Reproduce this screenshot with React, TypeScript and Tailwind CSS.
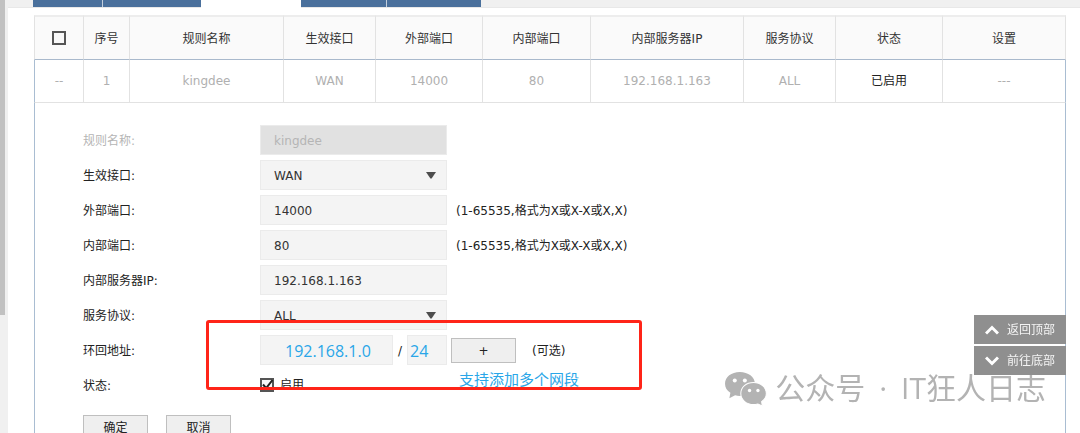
import { useState } from 'react';
import type { ReactNode } from 'react';

const columns = [
  { title: '序号', width: 'w-[46px]', value: '1' },
  { title: '规则名称', width: 'w-[154px]', value: 'kingdee' },
  { title: '生效接口', width: 'w-[92px]', value: 'WAN' },
  { title: '外部端口', width: 'w-[107px]', value: '14000' },
  { title: '内部端口', width: 'w-[108px]', value: '80' },
  { title: '内部服务器IP', width: 'w-[153px]', value: '192.168.1.163' },
  { title: '服务协议', width: 'w-[92px]', value: 'ALL' },
  { title: '状态', width: 'w-[107px]', value: '已启用', active: true },
  { title: '设置', width: 'w-[123px]', value: '---' },
];

const portHint = '(1-65535,格式为X或X-X或X,X)';

const box = 'h-[30px] border border-[#ebebeb] pt-[2px] outline-none';
const field = `${box} w-[187px] bg-[#f4f4f4] px-[13px] text-[#333]`;
const addressField = `${box} bg-[#f4f4f4] font-['Open_Sans',sans-serif] text-[16px] text-[#2aa6e8]`;
const button = 'h-[25px] w-[65px] border border-[#bfbfbf] bg-[#efefef] pt-[2px] text-center leading-[21px]';

interface RowProps {
  id: string;
  label: string;
  muted?: boolean;
  children: ReactNode;
}

function Row({ id, label, muted, children }: RowProps) {
  return (
    <div className="relative flex h-[30px] items-center">
      <label htmlFor={id} className={muted ? 'w-[177px] shrink-0 pt-[2px] text-[#b5b5b5]' : 'w-[177px] shrink-0 pt-[2px]'}>
        {label}
      </label>
      {children}
    </div>
  );
}

function SelectField({ id, options }: { id: string; options: string[] }) {
  return (
    <div className="relative">
      <select id={id} className={`${field} appearance-none`}>
        {options.map((option) => (
          <option key={option}>{option}</option>
        ))}
      </select>
      <svg viewBox="0 0 10 7" className="pointer-events-none absolute top-3 right-[11px] h-[7px] w-[10px]">
        <path d="M0 0h10L5.6 6.6h-1.2z" fill="#4d4d4d" />
      </svg>
    </div>
  );
}

function TopTabs() {
  return (
    <nav className="flex h-[8px] border-b border-[#e8e8e8] bg-[#f0f0f0] pl-[25px]">
      <a href="#tab1" aria-label="Tab 1" className="w-[70px] border-r border-[#c3cfdd] bg-[#4a709c]" />
      <a href="#tab2" aria-label="Tab 2" className="w-[98px] bg-[#4a709c]" />
      <a href="#tab3" aria-label="Tab 3" className="h-[8px] w-[100px] bg-white" />
      <a href="#tab4" aria-label="Tab 4" className="w-[86px] border-r border-[#c3cfdd] bg-[#4a709c]" />
      <a href="#tab5" aria-label="Tab 5" className="w-[94px] bg-[#4a709c]" />
    </nav>
  );
}

function RuleTable() {
  return (
    <table className="w-full table-fixed border-separate border-spacing-0 text-center">
      <thead>
        <tr className="h-[45px] bg-[#fafafa] [&>th]:border-t-2 [&>th]:border-r [&>th]:border-b [&>th]:border-t-[#ededed] [&>th]:border-r-[#e2e2e2] [&>th]:border-b-[#a9b9cc]">
          <th className="w-[50px] border-l border-l-[#e2e2e2] p-0">
            <input
              type="checkbox"
              aria-label="全选"
              className="mx-auto block size-[14px] appearance-none border-2 border-[#555] bg-[#f8f8f8]"
            />
          </th>
          {columns.map((column) => (
            <th key={column.title} className={`${column.width} p-0 pt-[2px] font-normal text-[#333]`}>
              {column.title}
            </th>
          ))}
        </tr>
      </thead>
      <tbody>
        <tr className="h-[43px] text-[#b0b0b0] [&>td]:border-r [&>td]:border-b [&>td]:border-[#e2e2e2] [&>td:last-child]:border-r-[#a9bdd2]">
          <td className="border-l border-l-[#a9bdd2]! p-0">--</td>
          {columns.map((column) => (
            <td key={column.title} className={column.active ? 'p-0 text-[#222]' : 'p-0'}>
              {column.value}
            </td>
          ))}
        </tr>
      </tbody>
    </table>
  );
}

function RuleForm() {
  const [enabled, setEnabled] = useState(true);

  return (
    <form className="flex flex-1 flex-col gap-[5px] border-x border-[#a9bdd2] pt-[22px] pl-12 text-[#222]">
      <Row id="name" label="规则名称:" muted>
        <input
          id="name"
          disabled
          defaultValue="kingdee"
          className={`${box} w-[187px] bg-[#e1e1e1] px-[13px] text-[#b5b5b5]`}
        />
      </Row>
      <Row id="iface" label="生效接口:">
        <SelectField id="iface" options={['WAN']} />
      </Row>
      <Row id="outer" label="外部端口:">
        <input id="outer" defaultValue="14000" className={field} />
        <span className="ml-[9px] pt-[2px]">{portHint}</span>
      </Row>
      <Row id="inner" label="内部端口:">
        <input id="inner" defaultValue="80" className={field} />
        <span className="ml-[9px] pt-[2px]">{portHint}</span>
      </Row>
      <Row id="server" label="内部服务器IP:">
        <input id="server" defaultValue="192.168.1.163" className={field} />
      </Row>
      <Row id="protocol" label="服务协议:">
        <SelectField id="protocol" options={['ALL', 'TCP', 'UDP']} />
      </Row>
      <Row id="loopback" label="环回地址:">
        <input id="loopback" defaultValue="192.168.1.0" className={`${addressField} w-[133px] pl-6`} />
        <span className="w-[14px] pt-[2px] text-center">/</span>
        <input aria-label="掩码" defaultValue="24" className={`${addressField} w-10 pl-[2px]`} />
        <button type="button" className={`${button} ml-1`}>
          +
        </button>
        <span className="ml-4 pt-[2px]">(可选)</span>
        {/* callout around the loopback settings */}
        <div className="pointer-events-none absolute -top-[15px] left-[123px] z-10 h-[70px] w-[436px] rounded-[3px] border-3 border-[#ff2418]" />
        <p className="absolute top-[34px] left-[376px] text-[15px] leading-[22px] whitespace-nowrap text-[#2aa6e8]">支持添加多个网段</p>
      </Row>
      <Row id="enabled" label="状态:">
        <div className="relative size-[14px]">
          <input
            id="enabled"
            type="checkbox"
            checked={enabled}
            onChange={(e) => setEnabled(e.target.checked)}
            className="block size-[14px] appearance-none border-2 border-[#555] bg-[#f8f8f8]"
          />
          {enabled && (
            <svg viewBox="0 0 14 14" className="pointer-events-none absolute inset-0 size-[14px]">
              <path d="M3 6.5l3.2 3.7L12.5 2" fill="none" stroke="#222" strokeWidth="2" />
            </svg>
          )}
        </div>
        <label htmlFor="enabled" className="ml-[6px]">
          启用
        </label>
      </Row>
      <div className="mt-[10px] flex gap-[18px]">
        <button type="button" className={button}>
          确定
        </button>
        <button type="button" className={button}>
          取消
        </button>
      </div>
    </form>
  );
}

function JumpButtons() {
  const item = 'flex h-[29px] w-[92px] items-center gap-2 bg-[#8f8f8f] pl-[11px] text-[#f4f4f4]';
  return (
    <div className="fixed top-[315px] right-[14px] z-20 flex flex-col gap-[2px]">
      <button type="button" className={item}>
        <svg viewBox="0 0 14 10" className="h-[10px] w-[14px]">
          <path d="M1 8.5L7 2.5l6 6" fill="none" stroke="#fff" strokeWidth="3" />
        </svg>
        返回顶部
      </button>
      <button type="button" className={item}>
        <svg viewBox="0 0 14 10" className="h-[10px] w-[14px]">
          <path d="M1 1.5l6 6 6-6" fill="none" stroke="#fff" strokeWidth="3" />
        </svg>
        前往底部
      </button>
    </div>
  );
}

function Watermark() {
  return (
    <div className="pointer-events-none fixed right-[34px] bottom-[27px] z-10 flex items-center gap-2 text-[#b3b3b3]">
      <svg viewBox="72 243 128 104" className="h-[35px] w-[43px]">
        <path
          d="M119 246c-25 0-44 15-44 35 0 12 6 21 16 27l-3 16 17-9c5 1 9 2 14 2 25 0 45-16 45-36s-20-35-45-35z"
          fill="#b3b3b3"
        />
        <path
          d="M160 277c-22 0-38 14-38 33 0 18 16 33 38 33 5 0 9-1 13-2l13 6-2-13c9-6 14-14 14-24 0-19-17-33-38-33z"
          fill="#b3b3b3"
          stroke="#fff"
          strokeWidth="3"
        />
        <circle cx="104" cy="271" r="6" fill="#fff" />
        <circle cx="134" cy="271" r="6" fill="#fff" />
        <circle cx="148" cy="301" r="5" fill="#fff" />
        <circle cx="173" cy="301" r="5" fill="#fff" />
      </svg>
      <span className="font-['Open_Sans','Noto_Sans_CJK_SC',sans-serif] text-[30px] leading-[36px]">
        公众号<span className="mx-[14px]">·</span>IT狂人日志
      </span>
    </div>
  );
}

export default function App() {
  return (
    <div className="flex h-screen overflow-hidden bg-white font-['DejaVu_Sans','Noto_Sans_CJK_SC',sans-serif] text-[12px] text-[#222]">
      <div className="w-2 shrink-0 bg-[#f0f0f0]">
        <div className="h-[315px] w-[5px] bg-[#c1c1c1]" />
      </div>
      <div className="min-w-0 flex-1">
        <TopTabs />
        <main className="flex min-h-full flex-col pt-[7px] pr-[14px] pl-[26px]">
          <RuleTable />
          <RuleForm />
        </main>
      </div>
      <JumpButtons />
      <Watermark />
    </div>
  );
}
